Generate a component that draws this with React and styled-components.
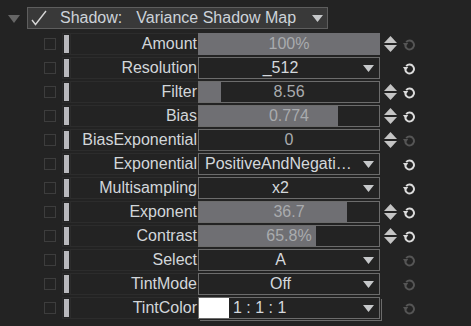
import styled, { createGlobalStyle } from 'styled-components';

const GlobalStyle = createGlobalStyle`
  html, body {
    margin: 0;
    padding: 0;
    background: #232323;
  }
  body {
    font-family: "Liberation Sans", Arial, sans-serif;
  }
`;

const Page = styled.div`
  width: 471px;
  height: 326px;
  padding-top: 7px;
  box-sizing: border-box;
  background: #232323;
  overflow: hidden;
`;

const HeaderRow = styled.div`
  display: flex;
  align-items: center;
  height: 22px;
`;

const Collapse = styled.svg`
  width: 12px;
  height: 8px;
  margin: 1px 7px 0 8px;
`;

const HeaderBox = styled.div`
  box-sizing: border-box;
  width: 301px;
  height: 22px;
  border: 1px solid #5e5e5e;
  background: #393939;
  display: flex;
  align-items: center;
  color: #cdd3da;
  font-size: 16px;
  position: relative;
`;

const Check = styled.svg`
  width: 16px;
  height: 16px;
  margin: 0 13px 0 3px;
`;

const HeaderTitle = styled.span`
  margin-right: 14px;
`;

const HeaderArrow = styled.svg`
  position: absolute;
  right: 4px;
  top: 7px;
  width: 11px;
  height: 7px;
`;

const Rows = styled.div`
  margin-top: 3px;
  display: flex;
  flex-direction: column;
`;

const Row = styled.div`
  display: flex;
  align-items: center;
  height: 24px;
`;

const Box = styled.div`
  box-sizing: border-box;
  width: 12px;
  height: 12px;
  border: 1px solid #3d3d3d;
  margin-left: 44px;
  margin-right: 6px;
`;

const Frame = styled.div`
  box-sizing: border-box;
  display: flex;
  align-items: stretch;
  height: 22px;
  border: 1px solid #2c2c2c;
  border-right: none;
  padding-left: 1px;
`;

const Bar = styled.div`
  width: 5px;
  margin: 1px 1px 1px 0;
  background: #b9b9bd;
`;

const Label = styled.div`
  box-sizing: border-box;
  width: 128px;
  margin-top: -1px;
  margin-bottom: -1px;
  border: 1px solid #2c2c2c;
  border-right: none;
  display: flex;
  align-items: center;
  justify-content: flex-end;
  padding-right: 1px;
  color: #d2d6da;
  font-size: 16px;
  white-space: nowrap;
`;

const Field = styled.div`
  box-sizing: border-box;
  position: relative;
  width: 182px;
  height: 22px;
  border: 1px solid ${(p) => (p.$fill ? '#6f6f73' : '#6c6c6c')};
  background: #232323;
  display: flex;
  align-items: center;
  font-size: 16px;
  color: #d4d8dc;
  white-space: nowrap;
  box-shadow: ${(p) => (p.$double ? '1px 1px 0 #232323, 2px 2px 0 #6c6c6c' : 'none')};
`;

const Fill = styled.div`
  position: absolute;
  left: 0;
  top: 0;
  bottom: 0;
  background: #6f6f73;
`;

const SliderText = styled.span`
  position: relative;
  width: 100%;
  text-align: center;
  color: #a9abae;
`;

const ComboText = styled.span`
  flex: 1;
  text-align: ${(p) => (p.$align === 'center' ? 'center' : 'left')};
  padding-left: ${(p) => (p.$align === 'left' ? '6px' : '0')};
  padding-right: 17px;
`;

const Swatch = styled.div`
  width: 30px;
  align-self: stretch;
  background: #ffffff;
  margin-right: 4px;
`;

const ComboArrow = styled.svg`
  position: absolute;
  right: 5px;
  top: 7px;
  width: 11px;
  height: 7px;
`;

const Spin = styled.svg`
  width: 13px;
  height: 16px;
  margin-left: 4px;
  visibility: ${(p) => (p.$show ? 'visible' : 'hidden')};
`;

const Reset = styled.svg`
  width: 13px;
  height: 13px;
  margin-left: 6px;
`;

const Triangle = () => (
  <ComboArrow viewBox="0 0 11 7">
    <polygon points="0,0 11,0 5.5,7" fill="#c6c8ca" />
  </ComboArrow>
);

const ResetIcon = ({ on }) => (
  <Reset viewBox="0 0 13 13">
    <path
      d="M3.2 4.2 A4.4 4.4 0 1 1 2.2 7.4"
      fill="none"
      stroke={on ? '#dcdcdc' : '#555555'}
      strokeWidth="2"
    />
    <polygon points="0,5 5.2,5 2.6,9" fill={on ? '#dcdcdc' : '#555555'} />
  </Reset>
);

const rows = [
  { name: 'Amount', kind: 'slider', value: '100%', pct: 100, spin: true, on: false },
  { name: 'Resolution', kind: 'combo', value: '_512', on: true },
  { name: 'Filter', kind: 'slider', value: '8.56', pct: 12, spin: true, on: true },
  { name: 'Bias', kind: 'slider', value: '0.774', pct: 77, spin: true, on: true },
  { name: 'BiasExponential', kind: 'slider', value: '0', pct: 0, spin: true, on: false },
  { name: 'Exponential', kind: 'combo', value: 'PositiveAndNegati…', left: true, on: true },
  { name: 'Multisampling', kind: 'combo', value: 'x2', on: true },
  { name: 'Exponent', kind: 'slider', value: '36.7', pct: 82, spin: true, on: true },
  { name: 'Contrast', kind: 'slider', value: '65.8%', pct: 65, spin: true, on: true },
  { name: 'Select', kind: 'combo', value: 'A', on: false },
  { name: 'TintMode', kind: 'combo', value: 'Off', on: false },
  { name: 'TintColor', kind: 'color', value: '1 : 1 : 1', on: false },
];

const ValueField = ({ row }) => {
  if (row.kind === 'slider') {
    return (
      <Field $fill={row.pct >= 100}>
        <Fill style={{ width: `${row.pct}%` }} />
        <SliderText>{row.value}</SliderText>
      </Field>
    );
  }
  if (row.kind === 'color') {
    return (
      <Field $double>
        <Swatch />
        <ComboText $align="flush">{row.value}</ComboText>
        <Triangle />
      </Field>
    );
  }
  return (
    <Field>
      <ComboText $align={row.left ? 'left' : 'center'}>{row.value}</ComboText>
      <Triangle />
    </Field>
  );
};

export default function App() {
  return (
    <Page>
      <GlobalStyle />
      <HeaderRow>
        <Collapse viewBox="0 0 12 8">
          <polygon points="0,0 12,0 6,8" fill="#666666" />
        </Collapse>
        <HeaderBox>
          <Check viewBox="0 0 16 16">
            <polyline
              points="1,10 4.5,14.5 15,1"
              fill="none"
              stroke="#d6d6d6"
              strokeWidth="1.4"
            />
          </Check>
          <HeaderTitle>Shadow:</HeaderTitle>
          <span>Variance Shadow Map</span>
          <HeaderArrow viewBox="0 0 11 7">
            <polygon points="0,0 11,0 5.5,7" fill="#c6c8ca" />
          </HeaderArrow>
        </HeaderBox>
      </HeaderRow>
      <Rows>
        {rows.map((row) => (
          <Row key={row.name}>
            <Box />
            <Frame>
              <Bar />
              <Label>{row.name}</Label>
            </Frame>
            <ValueField row={row} />
            <Spin $show={row.spin} viewBox="0 0 13 16">
              <polygon points="6.5,0 13,7 0,7" fill="#c4c4c4" />
              <polygon points="0,9 13,9 6.5,16" fill="#c4c4c4" />
            </Spin>
            <ResetIcon on={row.on} />
          </Row>
        ))}
      </Rows>
    </Page>
  );
}
